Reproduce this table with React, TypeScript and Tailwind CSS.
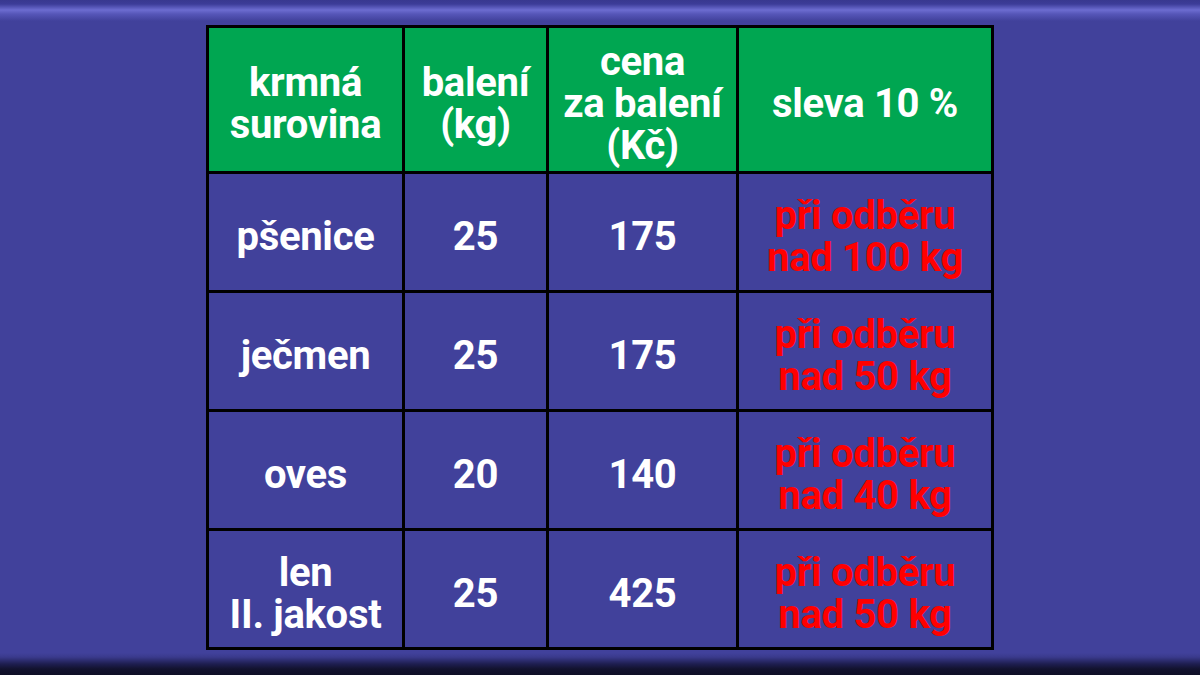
import React from "react";

const rows = [
  { name: ["pšenice"], bal: "25", cena: "175", sleva: "nad 100 kg" },
  { name: ["ječmen"], bal: "25", cena: "175", sleva: "nad 50 kg" },
  { name: ["oves"], bal: "20", cena: "140", sleva: "nad 40 kg" },
  { name: ["len", "II. jakost"], bal: "25", cena: "425", sleva: "nad 50 kg" },
];

function Cell({ children, className = "" }: { children: React.ReactNode; className?: string }) {
  return (
    <div className={`flex flex-col items-center justify-center text-center pt-[9px] ${className}`}>
      {children}
    </div>
  );
}

export default function App() {
  return (
    <div
      className="w-[1200px] h-[675px] flex flex-col bg-[#41419b] overflow-hidden"
      style={{ fontFamily: "Roboto, 'Noto Sans', sans-serif" }}
    >
      <div className="h-[22px] shrink-0 bg-[linear-gradient(to_bottom,#38388f_0px,#3c3c98_4px,#6c6cd0_10px,#5656b8_14px,#41419b_21px)]" />
      <div className="flex-1 flex justify-center pt-[3px]">
        <div className="grid grid-cols-[193px_141px_187px_252px] grid-rows-[143px_116px_116px_116px_116px] gap-[3px] bg-black p-[3px] h-fit text-white font-bold text-[40px] leading-[42px] tracking-[-0.3px]">
          <Cell className="bg-[#00a651]">
            <span>krmná</span>
            <span>surovina</span>
          </Cell>
          <Cell className="bg-[#00a651]">
            <span>balení</span>
            <span>(kg)</span>
          </Cell>
          <Cell className="bg-[#00a651]">
            <span>cena</span>
            <span>za balení</span>
            <span>(Kč)</span>
          </Cell>
          <Cell className="bg-[#00a651]">
            <span>sleva 10 %</span>
          </Cell>
          {rows.map((r, i) => (
            <React.Fragment key={i}>
              <Cell className="bg-[#41419b]">
                {r.name.map((n) => (
                  <span key={n}>{n}</span>
                ))}
              </Cell>
              <Cell className="bg-[#41419b]">
                <span>{r.bal}</span>
              </Cell>
              <Cell className="bg-[#41419b]">
                <span>{r.cena}</span>
              </Cell>
              <Cell className="bg-[#41419b] text-[#ff0000]">
                <span>při odběru</span>
                <span>{r.sleva}</span>
              </Cell>
            </React.Fragment>
          ))}
        </div>
      </div>
      <div className="h-[22px] shrink-0 bg-[linear-gradient(to_bottom,#41419b_0px,#3a3a8c_4px,#1e1e50_11px,#12122e_16px,#0e0e26_22px)]" />
    </div>
  );
}
